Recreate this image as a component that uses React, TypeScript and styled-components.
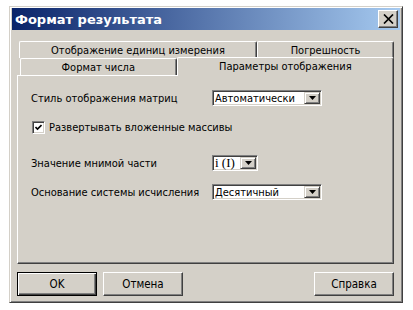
import React from "react";
import styled, { createGlobalStyle } from "styled-components";

const GlobalStyle = createGlobalStyle`
  html, body {
    margin: 0;
    padding: 0;
    background: #fff;
  }
  body {
    font-family: "DejaVu Sans Condensed", "DejaVu Sans", sans-serif;
    font-size: 11px;
    color: #000;
  }
`;

// Outer dialog frame
const Window = styled.div`
  margin: 6px 0 0 9px;
  width: 394px;
  height: 297px;
  box-sizing: border-box;
  background: #d4d0c8;
  border: 1px solid;
  border-color: #d4d0c8 #404040 #404040 #d4d0c8;
  box-shadow: inset 1px 1px #fff, inset -1px -1px #808080;
  padding: 1px 2px 2px 2px;
  display: flex;
  flex-direction: column;
`;

// Caption bar
const TitleBar = styled.div`
  height: 22px;
  flex-shrink: 0;
  background: linear-gradient(to right, #0a246a, #a6caf0);
  display: flex;
  align-items: center;
  justify-content: space-between;
  padding: 0 2px 0 3px;
`;

const Title = styled.span`
  color: #fff;
  font-weight: bold;
  font-size: 13px;
  font-family: "DejaVu Sans", sans-serif;
`;

const CloseButton = styled.div`
  width: 20px;
  height: 18px;
  box-sizing: border-box;
  background: #d4d0c8;
  border: 1px solid;
  border-color: #fff #404040 #404040 #fff;
  box-shadow: inset -1px -1px #808080;
  display: flex;
  align-items: center;
  justify-content: center;
`;

const Body = styled.div`
  flex: 1;
  display: flex;
  flex-direction: column;
  padding: 11px 6px 0 5px;
`;

// Tabs
const TabRow = styled.div<{ $indent: number }>`
  display: flex;
  margin-left: ${(p) => p.$indent}px;
  height: 17px;
`;

const Tab = styled.div<{ $w: number; $active?: boolean }>`
  width: ${(p) => p.$w}px;
  height: ${(p) => (p.$active ? 19 : 17)}px;
  margin-top: ${(p) => (p.$active ? -1 : 0)}px;
  box-sizing: border-box;
  background: #d4d0c8;
  border-top: 1px solid #fff;
  border-left: 1px solid #fff;
  border-right: 1px solid #404040;
  box-shadow: inset -1px 0 #808080;
  border-radius: 2px 2px 0 0;
  display: flex;
  align-items: center;
  justify-content: center;
  padding-bottom: ${(p) => (p.$active ? 2 : 0)}px;
  position: relative;
  z-index: ${(p) => (p.$active ? 2 : 0)};
`;

const Panel = styled.div`
  height: 189px;
  box-sizing: border-box;
  border: 1px solid;
  border-color: #fff #404040 #404040 #fff;
  box-shadow: inset -1px -1px #808080;
  padding: 14px 13px;
  display: flex;
  flex-direction: column;
`;

const FieldRow = styled.div<{ $top: number }>`
  display: grid;
  grid-template-columns: 181px auto;
  align-items: center;
  height: 16px;
  margin-top: ${(p) => p.$top}px;
`;

const Label = styled.span`
  white-space: nowrap;
`;

const Select = styled.div<{ $w: number }>`
  width: ${(p) => p.$w}px;
  height: 16px;
  box-sizing: border-box;
  background: #fff;
  border: 1px solid;
  border-color: #808080 #fff #fff #808080;
  box-shadow: inset 1px 1px #404040, inset -1px -1px #d4d0c8;
  display: flex;
  align-items: center;
  padding: 1px 1px 1px 2px;
`;

const SelectValue = styled.span<{ $serif?: boolean }>`
  flex: 1;
  white-space: nowrap;
  font-family: ${(p) =>
    p.$serif
      ? '"Liberation Serif", serif'
      : '"DejaVu Sans Condensed", "DejaVu Sans", sans-serif'};
  font-size: ${(p) => (p.$serif ? 13 : 11)}px;
`;

const DropButton = styled.div`
  width: 16px;
  height: 12px;
  box-sizing: border-box;
  background: #d4d0c8;
  border: 1px solid;
  border-color: #d4d0c8 #404040 #404040 #d4d0c8;
  box-shadow: inset 1px 1px #fff, inset -1px -1px #808080;
  display: flex;
  align-items: center;
  justify-content: center;
`;

const CheckRow = styled.label`
  display: flex;
  align-items: center;
  gap: 4px;
  height: 16px;
  margin-top: 13px;
  margin-left: 1px;
`;

const CheckBox = styled.div`
  width: 13px;
  height: 13px;
  box-sizing: border-box;
  background: #fff;
  border: 1px solid;
  border-color: #808080 #fff #fff #808080;
  box-shadow: inset 1px 1px #404040, inset -1px -1px #d4d0c8;
  display: flex;
  align-items: center;
  justify-content: center;
`;

// Bottom buttons
const ButtonBar = styled.div`
  display: flex;
  gap: 6px;
  margin-top: 8px;
`;

const Button = styled.div<{ $default?: boolean; $push?: boolean }>`
  width: 80px;
  height: 24px;
  box-sizing: border-box;
  background: #d4d0c8;
  border: 1px solid;
  border-color: ${(p) =>
    p.$default ? "#000" : "#fff #404040 #404040 #fff"};
  box-shadow: ${(p) =>
    p.$default
      ? "inset 1px 1px #fff, inset -1px -1px #404040, inset -2px -2px #808080"
      : "inset -1px -1px #808080"};
  margin-left: ${(p) => (p.$push ? "auto" : "0")};
  display: flex;
  align-items: center;
  justify-content: center;
  font-size: 11.5px;
`;

const Arrow = () => (
  <svg width="7" height="4" viewBox="0 0 7 4">
    <polygon points="0,0 7,0 3.5,4" fill="#000" />
  </svg>
);

const Combo = ({ w, value, serif }: { w: number; value: string; serif?: boolean }) => (
  <Select $w={w}>
    <SelectValue $serif={serif}>{value}</SelectValue>
    <DropButton>
      <Arrow />
    </DropButton>
  </Select>
);

export default function App() {
  return (
    <>
      <GlobalStyle />
      <Window>
        <TitleBar>
          <Title>Формат результата</Title>
          <CloseButton>
            <svg width="11" height="10" viewBox="0 0 11 10">
              <path d="M1 0.5 L10 9.5 M10 0.5 L1 9.5" stroke="#000" strokeWidth="1.7" />
            </svg>
          </CloseButton>
        </TitleBar>
        <Body>
          <TabRow $indent={2}>
            <Tab $w={238}>Отображение единиц измерения</Tab>
            <Tab $w={137}>Погрешность</Tab>
          </TabRow>
          <TabRow $indent={3}>
            <Tab $w={157}>Формат числа</Tab>
            <Tab $w={218} $active>
              Параметры отображения
            </Tab>
          </TabRow>
          <Panel>
            <FieldRow $top={0}>
              <Label>Стиль отображения матриц</Label>
              <Combo w={110} value="Автоматически" />
            </FieldRow>
            <CheckRow>
              <CheckBox>
                <svg width="7" height="7" viewBox="0 0 7 7">
                  <path d="M0.5 3 L2.5 5 L6.5 1" stroke="#000" strokeWidth="1.6" fill="none" />
                </svg>
              </CheckBox>
              Развертывать вложенные массивы
            </CheckRow>
            <FieldRow $top={20}>
              <Label>Значение мнимой части</Label>
              <Combo w={46} value="i (I)" serif />
            </FieldRow>
            <FieldRow $top={13}>
              <Label>Основание системы исчисления</Label>
              <Combo w={110} value="Десятичный" />
            </FieldRow>
          </Panel>
          <ButtonBar>
            <Button $default>OK</Button>
            <Button>Отмена</Button>
            <Button $push>Справка</Button>
          </ButtonBar>
        </Body>
      </Window>
    </>
  );
}
